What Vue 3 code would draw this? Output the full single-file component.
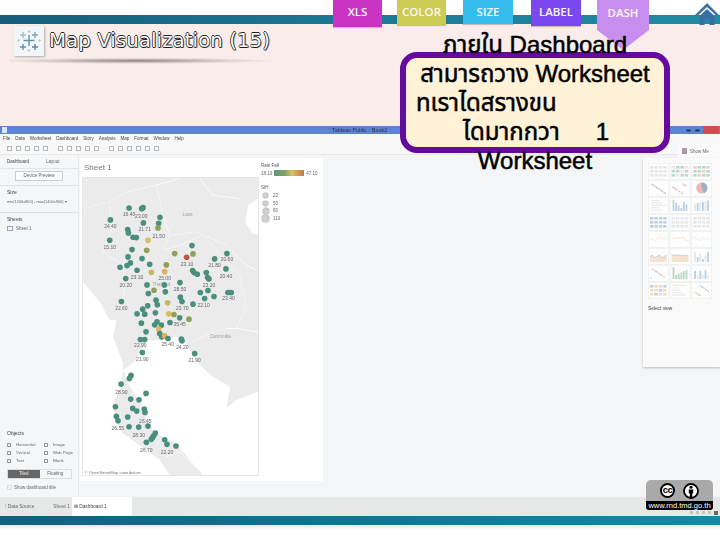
<script setup>
const g = '#4a8f7e', o = '#8f9f5c', y = '#d8bc5e', a = '#dfae5e', r = '#b9584a'
const upper = [[148,158],[186,160],[190,157],[92,194],[241,186],[191,203],[237,204],[235,218,o],[144,223],[146,233],[160,246],[170,247],[90,255],[205,255,y],[157,283],[201,285,o],[337,271],[285,295,o],[340,296,o],[321,306,r],[405,311],[442,295],[145,305],[187,310],[152,323],[142,331],[121,336],[210,327],[260,329,o],[172,345],[215,351,'#c4b860'],[255,349,a],[339,346],[343,352],[353,357],[380,352],[439,341],[384,367],[388,371],[138,370],[301,382],[202,389],[254,389],[223,405,o],[206,415],[257,410],[362,412],[385,406],[375,430],[403,424],[445,412],[455,412],[302,426],[307,439],[229,435],[233,449],[264,443,'#c4b860'],[125,439],[340,447],[204,452],[189,462],[172,476],[195,477],[227,473],[267,476,y],[283,478,o],[300,488],[328,492,o]]
const lower = [[185,9],[232,5],[225,14],[245,15],[271,7],[199,35],[237,27,y],[240,40],[246,50],[255,47,a],[265,55],[182,58],[195,58],[305,57],[307,62],[188,97],[345,100],[154,166],[149,175],[124,192],[199,220],[153,237],[178,239],[107,260],[159,265],[171,273],[194,267],[196,277],[110,289],[115,302],[144,291],[148,320],[177,321],[205,318],[227,339],[222,347],[218,353],[215,358],[200,367],[255,359],[262,373],[289,378]]
const dots = [...upper, ...lower.map(d => [d[0], d[1] + 495, d[2]])].map(d => ({ x: d[0], y: d[1], c: d[2] || g }))
const labels = [['16.40',148,182],['23.00',185,188],['24.40',92,219],['21.71',195,227],['21.50',237,248],['15.10',90,280],['23.10',172,371],['20.20',138,395],['25.00',255,373],['23.10',322,331],['21.80',405,336],['20.60',442,318],['20.40',439,367],['23.20',388,395],['28.50',301,407],['23.40',447,435],['22.60',125,464],['23.70',308,463],['22.10',372,455],['35.45',300,512],['22.90',182,577],['21.90',188,617],['25.40',264,574],['24.20',308,581],['21.90',345,620],['28.90',125,717],['26.45',197,803],['26.55',114,826],['28.30',177,846],['26.70',200,890],['22.20',262,898]]

const menu = ['File', 'Data', 'Worksheet', 'Dashboard', 'Story', 'Analysis', 'Map', 'Format', 'Window', 'Help']
const objects = ['Horizontal', 'Image', 'Vertical', 'Web Page', 'Text', 'Blank']
const tools = [12, 12, 12, 12, 12, 20, 12, 12, 12, 12, 20, 12, 12, 12, 12, 12]

const or = '#e8b98a', bl = '#7ea6cc', gy = '#cfd3d6', gn = '#74b597', rd = '#e29a96'
const spec = [['grid',gy,gy],['grid',gn,gy],['grid',gn,rd],['dots',bl,rd],['dots',rd,rd],['pie',rd,bl],['text',gy,gy],['bars',bl,bl],['bars',bl,gy],['grid',bl,bl],['grid',gy,gy],['grid',gy,gy],['line',or,bl],['line',or,bl],['line',gy,bl],['area',or,bl],['area',or,bl],['bars',bl,gy],['dots',or,bl],['bars',gn,gn],['bars',gy,bl],['grid',or,bl],['text',gy,bl],['dots',gn,or]]
const thumbs = spec.map(([type, c1, c2], i) => {
  const x = (i % 3) * 21.6
  const yy = Math.floor(i / 3) * 17
  const rnd = k => ((i + 3) * (k + 7) * 37) % 100 / 100
  const marks = []
  let line = ''
  if (type === 'grid') for (let k = 0; k < 12; k++) marks.push({ x: 2 + (k % 4) * 4.4, y: 3 + Math.floor(k / 4) * 4, w: 3.4, h: 2.6, c: k % 3 ? c1 : c2 })
  if (type === 'text') for (let k = 0; k < 5; k++) marks.push({ x: 3, y: 3 + k * 2.4, w: 6 + rnd(k) * 9, h: 1, c: c1 })
  if (type === 'bars') for (let k = 0; k < 6; k++) { const h = 3 + rnd(k) * 9; marks.push({ x: 3 + k * 2.6, y: 14 - h, w: 1.8, h, c: k % 2 ? c1 : c2 }) }
  if (type === 'dots') for (let k = 0; k < 14; k++) marks.push({ x: 2 + rnd(k) * 15, y: 3 + rnd(k + 9) * 10, w: 1.4, h: 1.4, c: k % 3 ? c1 : c2 })
  if (type === 'line' || type === 'area') {
    line = Array.from({ length: 8 }, (_, k) => `${2 + k * 2.4},${6 + rnd(k) * 4}`).join(' ')
  }
  return { type, x, y: yy, c1, c2, marks, line }
})
</script>

<template>
  <div class="slide">
    <div class="top-white"></div>
    <div class="band"></div>

    <header class="head">
      <div class="title-row">
        <div class="logo">
          <svg viewBox="0 0 24 24" width="24" height="24">
            <g fill="none" stroke-width="1.4">
              <path d="M12 6v11M6.5 11.5h11" stroke="#5f93a8" />
              <path d="M6 3v6M3 6h6" stroke="#a5bcc9" />
              <path d="M18 3v6M15 6h6" stroke="#7ea5ba" />
              <path d="M6 15v6M3 18h6" stroke="#5f93a8" />
              <path d="M18 15v6M15 18h6" stroke="#4f8aa2" />
              <path d="M12 1v3M10.5 2.5h3M12 20v3M10.5 21.5h3M1.500 10v3M0 11.500h3M22.500 10v3M21 11.500h3" stroke="#bccad4" stroke-width=".9" />
            </g>
          </svg>
        </div>
        <h1 class="title">Map Visualization (15)</h1>
      </div>
      <div class="title-shadow"></div>
    </header>

    <section class="window">
      <div class="titlebar">
        <span class="app-icon"></span>
        <span class="app-name">Tableau Public - Book2</span>
        <span class="win-controls">
          <i class="wc"></i><i class="wc"></i><i class="wc close"></i>
        </span>
      </div>
      <nav class="menu"><span v-for="m in menu" :key="m">{{ m }}</span></nav>
      <div class="toolbar">
        <i v-for="(t, i) in tools" :key="i" class="tool" :class="{ wide: t > 12 }"></i>
      </div>

      <div class="body">
        <aside class="side">
          <div class="side-tabs"><b>Dashboard</b><span>Layout</span></div>
          <div class="device">Device Preview</div>
          <div class="side-sec"><b>Size</b><span>min(1200x800) - max(1400x900) ▾</span></div>
          <div class="side-sec"><b>Sheets</b><span class="sheet-item"><i class="sheet-ic"></i>Sheet 1</span></div>
          <div class="side-fill"></div>
          <div class="objects">
            <b>Objects</b>
            <div class="obj-grid">
              <span v-for="ob in objects" :key="ob"><i class="obj-ic"></i>{{ ob }}</span>
            </div>
            <div class="toggle"><span class="on">Tiled</span><span>Floating</span></div>
            <label class="show-title"><i class="check"></i>Show dashboard title</label>
          </div>
        </aside>

        <main class="canvas">
          <div class="chart">
            <div class="sheet-title">Sheet 1</div>
            <svg class="map" viewBox="10 68 525 892">
              <rect x="10" y="68" width="525" height="892" fill="#fff" />
              <path fill="#ebebeb" d="M10 68H535V130L505 150 497 200 518 235 535 237V710L470 735 440 760 452 695 400 665 350 620 320 565 290 545 250 555 200 555 165 620 130 645 150 695 185 745 200 795 230 835 290 865 330 915 370 960H270L240 915 200 885 130 835 105 795 100 745 125 690 130 625 100 545 110 495 90 495 60 440 10 380Z" />
              <g fill="none" stroke="#fff" stroke-width="2.500">
                <path d="M10 160 90 140 140 110 230 90 250 180 270 240 350 230 440 270 500 330 530 345" />
                <path d="M90 140 95 220 70 290 130 330 135 410 110 470" />
                <path d="M270 240 250 285 300 270 370 240 415 290 480 360 500 460 470 520 535 530" />
                <path d="M340 560 380 540 440 520 470 520" />
                <path d="M230 90 300 70M360 70 400 120 480 130" />
                <path d="M260 905 300 890 345 935" />
              </g>
              <g fill="none" stroke="#cfcfcf" stroke-width="1" stroke-dasharray="3 3">
                <path d="M10 160 90 140 140 110 230 90 250 180 270 240 350 230 440 270 500 330" />
                <path d="M270 240 250 285 300 270 370 240 415 290 480 360 500 460 470 520" />
                <path d="M90 140 95 220 70 290 130 330 135 410 110 470" />
                <path d="M340 560 380 540 440 520" />
              </g>
              <text x="324" y="183" class="place">Laos</text>
              <text x="245" y="391" class="place">Thailand</text>
              <text x="422" y="550" class="place">Cambodia</text>
              <circle v-for="(d, i) in dots" :key="i" :cx="d.x" :cy="d.y" r="8.500" :fill="d.c" />
              <text v-for="(l, i) in labels" :key="'l' + i" :x="l[1]" :y="l[2]" class="val">{{ l[0] }}</text>
              <text x="15" y="956" class="credit">© OpenStreetMap contributors</text>
            </svg>
            <div class="legend">
              <div class="lg-title">Rain Fall</div>
              <div class="lg-bar"><span>18.10</span><i></i><span>47.10</span></div>
              <div class="lg-title sih">SIH</div>
              <div class="lg-size"><i class="s1"></i>22</div>
              <div class="lg-size"><i class="s2"></i>50</div>
              <div class="lg-size"><i class="s3"></i>80</div>
              <div class="lg-size"><i class="s4"></i>110</div>
            </div>
          </div>
        </main>

        <aside class="showme">
          <div class="showme-tab"><i></i>Show Me</div>
          <div class="showme-panel">
            <svg class="thumbs" viewBox="0 0 65 137">
              <g v-for="(t, i) in thumbs" :key="i" :transform="`translate(${t.x} ${t.y})`" class="thumb">
                <rect x=".5" y=".5" width="20" height="15.800" fill="#fdfdfd" stroke="#e9ebec" stroke-width=".6" />
                <rect v-for="(m, k) in t.marks" :key="k" :x="m.x" :y="m.y" :width="m.w" :height="m.h" :fill="m.c" opacity=".5" />
                <circle v-if="t.type === 'pie'" cx="10.500" cy="8" r="5.500" :fill="t.c1" opacity=".7" />
                <path v-if="t.type === 'pie'" d="M10.500 8V2.500A5.500 5.500 0 0 1 13 13Z" :fill="t.c2" opacity=".7" />
                <polyline v-if="t.type === 'line'" :points="t.line" fill="none" :stroke="t.c1" stroke-width=".5" opacity=".7" />
                <polygon v-if="t.type === 'area'" :points="`2,14 ${t.line} 18.800,14`" :fill="t.c1" opacity=".4" />
                <polyline v-if="t.type === 'area'" :points="t.line" fill="none" :stroke="t.c2" stroke-width=".4" />
              </g>
            </svg>
            <div class="select-view">Select view</div>
          </div>
        </aside>
      </div>

      <footer class="sheet-tabs">
        <span>⁞ Data Source</span><span>Sheet 1</span><span class="active">⊞ Dashboard 1</span>
        <span class="sheet-nav"><i></i><i></i><i></i><i></i><i class="dark"></i></span>
      </footer>
    </section>

    <div class="band bottom"></div>
    <div class="foot"></div>

    <div class="tabs">
      <div class="tab xls">XLS</div>
      <div class="tab color">COLOR</div>
      <div class="tab size">SIZE</div>
      <div class="tab label">LABEL</div>
      <div class="tab dash">DASH</div>
    </div>

    <svg class="home" viewBox="0 0 26 24" width="26" height="24">
      <path d="M13 1 1 13h3.500L13 5l8.500 8H25Z" fill="#3f72a8" />
      <path d="M5.500 14 13 7l7.500 7v9h-5v-6h-5v6h-5Z" fill="#3a6fa6" />
    </svg>

    <div class="callout">
      <p>ภายใน Dashboard</p>
      <p>สามารถวาง Worksheet</p>
      <p class="left">ทเราไดสรางขน</p>
      <p class="fourth"><span>ไดมากกวา</span><span>1</span></p>
      <p>Worksheet</p>
    </div>

    <div class="cc">
      <div class="cc-icons">
        <span class="cc-c">cc</span>
        <span class="cc-i">
          <svg viewBox="0 0 16 16" width="16" height="16">
            <circle cx="8" cy="8" r="7" fill="#fff" stroke="#000" stroke-width="1.800" />
            <circle cx="8" cy="4.200" r="1.500" />
            <path d="M5.800 6.400h4.400v4.200H9.200V14H6.800v-3.400h-1Z" />
          </svg>
        </span>
      </div>
      <div class="cc-url">www.rnd.tmd.go.th</div>
    </div>
  </div>
</template>

<style scoped>
.slide {
  position: relative;
  width: 720px;
  height: 540px;
  overflow: hidden;
  background: #fff;
  display: flex;
  flex-direction: column;
  font-family: "Liberation Sans", Arial, sans-serif;
}
.top-white { height: 15px; flex: none; }
.band { height: 9px; flex: none; background: linear-gradient(90deg, #155d7c, #1d7f99 60%, #1f8ba4); }
.band.bottom { height: 9px; background: linear-gradient(90deg, #10607f, #1b86a6); }
.foot { flex: 1; background: linear-gradient(#e8e8e8, #fff 5px); }

.head { height: 102px; flex: none; background: #f9ecea; padding: 2px 0 0 14px; box-sizing: border-box; }
.title-row { display: flex; align-items: center; gap: 5px; }
.logo {
  width: 30px; height: 30px; background: #f3f6f6; box-shadow: 1px 1px 2px #aaa;
  display: flex; align-items: center; justify-content: center;
}
.title {
  margin: 0 0 1px; font-weight: 400; color: #fdfdfd;
  font-family: "DejaVu Sans", sans-serif; font-size: 19.700px; letter-spacing: .1px;
  text-shadow: -.7px 0 #222, .7px 0 #222, 0 -.7px #222, 0 .7px #222, 1.200px 1.200px #888;
}
.title-shadow {
  width: 278px; height: 7px; margin: 2px 0 0 -4px;
  background: radial-gradient(ellipse 50% 45% at 45% 40%, #8c8480, rgba(200, 190, 186, .5) 70%, transparent);
}

.window { height: 390px; flex: none; background: #f4f5f6; display: flex; flex-direction: column; filter: blur(.4px); }
.titlebar { height: 8px; background: #5b85cc; display: flex; align-items: center; flex: none; }
.app-icon { width: 5px; height: 6px; margin-left: 2px; background: #dbe8f6; }
.app-name { margin-left: 325px; font-size: 5.400px; color: #334; white-space: nowrap; }
.win-controls { margin-left: auto; display: flex; align-items: center; }
.wc { width: 7px; height: 3px; background: #1d2f50; transform: scale(.6); margin-right: 2px; }
.wc.close { width: 16px; height: 8px; margin: 0 1px 0 0; background: #c9504e; transform: none; }

.menu { height: 9px; flex: none; display: flex; gap: 5px; align-items: center; padding-left: 3px; font-size: 4.500px; color: #444; background: #f8f8f9; }
.toolbar { height: 12px; flex: none; display: flex; align-items: center; gap: 4px; padding-left: 7px; background: #f8f8f9; border-bottom: 1px solid #e8e8e8; box-sizing: border-box; }
.tool { width: 5px; height: 5px; border: 1px solid #b4babe; box-sizing: border-box; }
.tool.wide { margin-left: 6px; }

.body { flex: 1; display: flex; min-height: 0; }
.side { width: 78px; flex: none; display: flex; flex-direction: column; font-size: 4.500px; color: #666; background: #f5f6f7; border-right: 1px solid #e9e9e9; }
.side b { font-weight: 400; color: #444; font-size: 5px; }
.side-tabs { height: 14px; display: flex; align-items: center; gap: 17px; padding-left: 7px; border-bottom: 1px solid #e4e4e4; box-sizing: border-box; }
.side-tabs b { font-size: 4.500px; }
.device { margin: 2px 0 0 15px; width: 48px; height: 10px; border: 1px solid #ccc; box-sizing: border-box; text-align: center; line-height: 8px; background: #fbfbfb; }
.side-sec { margin-top: 4px; padding: 3px 0 4px 7px; border-top: 1px solid #e2e2e2; display: flex; flex-direction: column; gap: 4px; white-space: nowrap; font-size: 3.900px; }
.sheet-item { display: flex; align-items: center; gap: 3px; font-size: 4.500px; }
.sheet-ic { width: 6px; height: 5px; border: 1px solid #a3a3b5; box-sizing: border-box; }
.side-fill { flex: 1; }
.objects { padding: 0 6px 7px 7px; display: flex; flex-direction: column; }
.obj-grid { display: grid; grid-template-columns: 37px 1fr; row-gap: 3px; margin-top: 6px; font-size: 4.300px; }
.obj-grid span { display: flex; align-items: center; gap: 5px; height: 5px; white-space: nowrap; }
.obj-ic { width: 4px; height: 4px; border: 1px solid #999; box-sizing: border-box; }
.toggle { display: flex; margin-top: 6px; height: 8px; border: 1px solid #ddd; line-height: 8px; text-align: center; }
.toggle span { flex: 1; }
.toggle .on { background: #666; color: #eee; }
.show-title { display: flex; align-items: center; gap: 2px; margin-top: 6px; white-space: nowrap; }
.check { width: 5px; height: 5px; border: 1px solid #ddd; box-sizing: border-box; }

.canvas { width: 243px; flex: none; margin: 3px 0 16px 1px; background: #fff; }
.chart { position: relative; height: 100%; padding: 5px 0 0 3px; box-sizing: border-box; }
.sheet-title { height: 15px; font-size: 8px; color: #777; padding-left: 1px; }
.map { display: block; width: 175px; height: 297px; outline: 1px solid #e6e6e6; }
.place { font-size: 14px; fill: #a5a5a5; text-anchor: middle; }
.val { font-size: 15px; fill: #666; text-anchor: middle; }
.credit { font-size: 12.500px; fill: #777; }
.legend { position: absolute; left: 181px; top: 5px; font-size: 4.500px; color: #666; }
.lg-title { color: #555; height: 7px; }
.lg-title.sih { margin-top: 9px; height: 7px; }
.lg-bar { display: flex; align-items: center; gap: 2px; }
.lg-bar i { width: 30px; height: 6px; background: linear-gradient(90deg, #5e9a7a, #7da26a 35%, #d8c35a 60%, #c4774a); }
.lg-size { display: flex; align-items: center; gap: 4px; height: 7.500px; padding-left: 1px; }
.lg-size i { background: #cfd0d0; border-radius: 50%; box-shadow: 0 0 0 .5px #aaa; }
.s1 { width: 5px; height: 5px; margin: 0 1px; }
.s2 { width: 5.500px; height: 5.500px; margin: 0 .8px; }
.s3 { width: 6px; height: 6px; margin: 0 .5px; }
.s4 { width: 7px; height: 7px; }

.showme { margin-left: auto; width: 77px; flex: none; margin-top: -11px; display: flex; flex-direction: column; align-items: flex-end; }
.showme-tab { width: 42px; height: 14px; background: #fafafa; display: flex; align-items: center; gap: 3px; padding-left: 4px; box-sizing: border-box; font-size: 4.500px; color: #666; }
.showme-tab i { width: 5px; height: 6px; background: linear-gradient(#b99, #99a); }
.showme-panel { width: 77px; height: 209px; box-sizing: border-box; background: #fafafa; box-shadow: 0 1px 2px #bbb; padding: 5px 0 0 5px; }
.thumbs { display: block; width: 65px; height: 137px; }
.select-view { margin-top: 6px; font-size: 4.800px; color: #444; }

.sheet-tabs { height: 19px; flex: none; display: flex; align-items: center; gap: 19px; padding-left: 5px; background: #e6e7e7; font-size: 4.800px; color: #666; }
.sheet-tabs .active { background: #fff; height: 100%; display: flex; align-items: center; padding: 0 2px; margin-left: -17px; color: #444; width: 60px; box-sizing: border-box; }
.sheet-nav { margin-left: auto; margin-right: 2px; margin-top: 12px; display: flex; gap: 3px; }
.sheet-nav i { width: 3px; height: 3px; background: #c4c4c4; }
.sheet-nav .dark { width: 4px; height: 4px; background: #666; }

.tabs { position: absolute; left: 333px; top: 0; display: flex; align-items: flex-start; color: #f8f8f8; font-family: "Open Sans", "Liberation Sans", sans-serif; font-size: 11.500px; font-weight: 600; text-align: center; }
.tab { line-height: 24px; box-shadow: 0 1px 1px rgba(0, 0, 0, .2); }
.xls { width: 49px; height: 27px; background: #c934c4; }
.color { width: 49px; height: 25px; margin-left: 15px; background: #cccb54; }
.size { width: 50px; height: 24px; margin-left: 17px; background: #35bdee; }
.label { width: 50px; height: 26px; margin-left: 18px; background: #7a48ee; }
.dash {
  width: 52px; height: 50px; margin-left: 16px; background: #c78ef0; line-height: 26px; box-shadow: none;
  clip-path: polygon(0 0, 100% 0, 100% 60%, 50% 100%, 0 60%);
}
.home { position: absolute; left: 694px; top: 2px; }

.callout {
  position: absolute; left: 400px; top: 52px; width: 270px; height: 101px; box-sizing: border-box;
  border: 6px solid #650a9c; border-radius: 17px; background: #fff2d6;
  display: flex; flex-direction: column; justify-content: center; align-items: center;
  color: #000; font-size: 24px; line-height: 29px; -webkit-text-stroke: .5px #000;
  font-family: "Liberation Sans", "Noto Sans Thai", "Noto Sans", sans-serif;
}
.callout p { margin: 0; white-space: nowrap; flex: none; }
.callout .left { align-self: flex-start; margin-left: 10px; }
.callout .fourth { display: flex; gap: 36px; margin-left: 2px; }

.cc { position: absolute; left: 646px; top: 480px; width: 67px; height: 30px; border-radius: 5px 5px 3px 3px; background: #a9a9a9; overflow: hidden; display: flex; flex-direction: column; }
.cc-icons { flex: 1; display: flex; justify-content: center; align-items: center; gap: 8px; }
.cc-c { width: 15px; height: 15px; border-radius: 50%; border: 2px solid #000; background: #fff; box-sizing: border-box; font-size: 9.500px; font-weight: 700; line-height: 9px; text-align: center; color: #000; letter-spacing: -.5px; }
.cc-i { display: flex; }
.cc-url { height: 9px; background: #000; color: #fff; font-size: 7.500px; line-height: 9px; text-align: center; white-space: nowrap; }
</style>
